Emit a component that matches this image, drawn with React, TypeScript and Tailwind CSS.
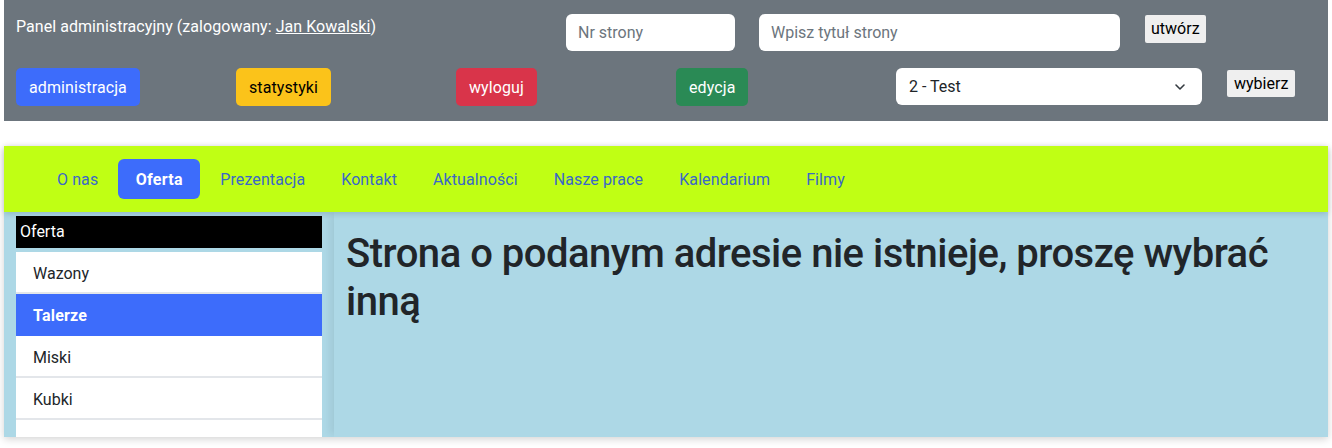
import React from "react";

const font = { fontFamily: 'Roboto, "Noto Sans", sans-serif' };

function Btn({ label, cls }: { label: string; cls: string }) {
  return (
    <button className={`h-[38px] rounded-[5px] px-[13px] pt-[1px] text-[16px] leading-[24px] tracking-[0.1px] ${cls}`}>{label}</button>
  );
}

export default function App() {
  const navItems = ["O nas", "Oferta", "Prezentacja", "Kontakt", "Aktualności", "Nasze prace", "Kalendarium", "Filmy"];
  const list = ["Wazony", "Talerze", "Miski", "Kubki", ""];
  return (
    <div className="w-[1332px] h-[448px] bg-white overflow-hidden text-[#212529]" style={font}>
      <div className="mx-[4px]">
        <header className="h-[121px] bg-[#6c757d] px-[12px] pt-[14px]">
          <div className="flex items-start h-[38px]">
            <div className="w-[550px] pt-[1px] text-white text-[16px] leading-[24px] tracking-[0.05px]">
              Panel administracyjny (zalogowany: <span className="underline">Jan Kowalski</span>)
            </div>
            <div className="w-[169px] h-[37px] rounded-[6px] bg-white px-[12px] pt-[1px] flex items-center text-[16px] text-[#6c757d]">
              Nr strony
            </div>
            <div className="ml-[24px] w-[361px] h-[37px] rounded-[6px] bg-white px-[12px] pt-[1px] flex items-center text-[16px] text-[#6c757d]">
              Wpisz tytuł strony
            </div>
            <button className="ml-[25px] mt-[1px] h-[28px] px-[6px] bg-[#efefef] text-black text-[16px] rounded-[2px]">utwórz</button>
          </div>
          <div className="flex items-start mt-[16px]">
            <div className="w-[220px]"><Btn label="administracja" cls="bg-[#3d6cfb] text-white" /></div>
            <div className="w-[220px]"><Btn label="statystyki" cls="bg-[#fbc31a] text-black" /></div>
            <div className="w-[220px]"><Btn label="wyloguj" cls="bg-[#d9344a] text-white" /></div>
            <div className="w-[220px]"><Btn label="edycja" cls="bg-[#2a8a55] text-white" /></div>
            <div className="w-[306px] h-[37px] rounded-[6px] bg-white pl-[13px] pr-[16px] pt-[1px] flex items-center justify-between text-[16px] text-[#212529]">
              <span>2 - Test</span>
              <svg width="12" height="8" viewBox="0 0 12 8" fill="none" stroke="#343a40" strokeWidth="1.6" strokeLinecap="round" strokeLinejoin="round">
                <path d="M2 2l4 4 4-4" />
              </svg>
            </div>
            <button className="ml-[25px] mt-[2px] h-[27px] px-[7px] bg-[#efefef] text-black text-[16px] rounded-[2px]">wybierz</button>
          </div>
        </header>
        <div className="h-[25px]" />
        <div className="shadow-[0_2px_8px_rgba(0,0,0,0.18)]">
          <nav className="relative z-10 h-[66px] bg-[#c0ff14] flex items-center pl-[37px] gap-[4px] shadow-[0_2px_6px_rgba(0,0,0,0.15)]">
            {navItems.map((n) =>
              n === "Oferta" ? (
                <a key={n} className="w-[82px] h-[40px] pt-[1px] flex items-center justify-center rounded-[6px] bg-[#3d6cfb] text-white font-bold text-[16px] tracking-[0.3px]">
                  {n}
                </a>
              ) : (
                <a key={n} className="h-[40px] px-[16px] pt-[1px] flex items-center text-[#3a68c8] text-[16px] tracking-[0.1px]">
                  {n}
                </a>
              )
            )}
          </nav>
          <div className="h-[225px] bg-[#add8e6] flex overflow-hidden">
            <aside className="w-[330px] shrink-0 px-[12px] pt-[4px]">
              <div className="h-[32px] bg-black text-white text-[16px] px-[4px] flex items-center">Oferta</div>
              <div className="mt-[4px]">
                {list.map((l, i) =>
                  l === "Talerze" ? (
                    <div key={i} className="h-[42px] pt-[1px] bg-[#3d6cfb] text-white font-bold text-[16px] px-[17px] flex items-center tracking-[0.2px]">
                      {l}
                    </div>
                  ) : (
                    <div key={i} className="h-[42px] pt-[1px] bg-white shadow-[inset_0_-2px_0_#e3e6ea] text-[16px] text-[#212529] px-[17px] flex items-center">
                      {l}
                    </div>
                  )
                )}
              </div>
            </aside>
            <main className="relative flex-1 px-[12px] pt-[18px] shadow-[-7px_0_7px_-3px_rgba(0,0,0,0.07)]">
              <h1 className="text-[40px] leading-[48px] font-medium tracking-[-0.5px] text-[#212529]">
                Strona o podanym adresie nie istnieje, proszę wybrać inną
              </h1>
            </main>
          </div>
        </div>
      </div>
    </div>
  );
}
